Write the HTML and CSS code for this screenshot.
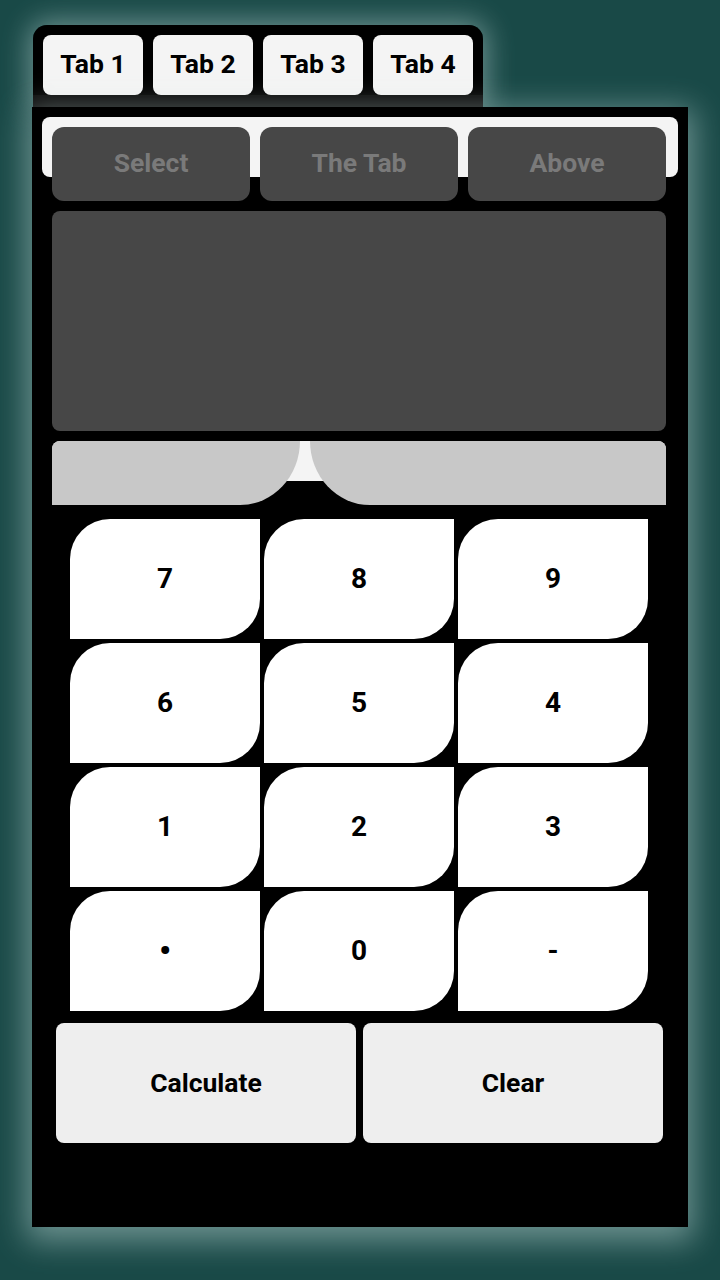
FILE: index.html
```html
<!DOCTYPE html>
<html>
<head>
<meta charset="utf-8">
<link rel="stylesheet" href="styles.css">
</head>
<body>
<div class="app">
  <div class="tabbar">
    <div class="tab">Tab 1</div>
    <div class="tab">Tab 2</div>
    <div class="tab">Tab 3</div>
    <div class="tab">Tab 4</div>
  </div>
  <div class="panel">
    <div class="strip">
      <div class="sbtn">Select</div>
      <div class="sbtn">The Tab</div>
      <div class="sbtn">Above</div>
    </div>
    <div class="display"></div>
    <div class="bars">
      <div class="bar bar-l"></div>
      <div class="bar bar-r"></div>
    </div>
    <div class="keypad">
      <div class="key">7</div>
      <div class="key">8</div>
      <div class="key">9</div>
      <div class="key">6</div>
      <div class="key">5</div>
      <div class="key">4</div>
      <div class="key">1</div>
      <div class="key">2</div>
      <div class="key">3</div>
      <div class="key dot">•</div>
      <div class="key">0</div>
      <div class="key">-</div>
    </div>
    <div class="actions">
      <div class="action">Calculate</div>
      <div class="action">Clear</div>
    </div>
  </div>
</div>
</body>
</html>
```
FILE: styles.css
```css
html, body {
  margin: 0;
  padding: 0;
}
body {
  width: 720px;
  height: 1280px;
  background: #194947;
  font-family: Roboto, "Liberation Sans", sans-serif;
  overflow: hidden;
}
.app {
  padding: 25px 0 0 32px;
}
.tabbar {
  display: inline-flex;
  gap: 10px;
  margin-left: 1px;
  padding: 10px 10px 12px;
  background: linear-gradient(#000 0, #000 70px, #0b0b0b 70px);
  border-radius: 14px 14px 0 0;
  box-shadow: 0 0 28px 4px rgba(210, 235, 232, 0.45);
  vertical-align: top;
}
.tab {
  width: 100px;
  height: 60px;
  box-sizing: border-box;
  padding-bottom: 3px;
  background: #f4f4f4;
  border-radius: 8px;
  display: flex;
  align-items: center;
  justify-content: center;
  font-weight: 700;
  font-size: 26.5px;
  color: #000;
}
.panel {
  position: relative;
  width: 656px;
  height: 1120px;
  background: #000;
  box-shadow: 0 8px 30px 6px rgba(210, 235, 232, 0.45);
  overflow: hidden;
}
.strip {
  margin: 10px 10px 0;
  height: 60px;
  box-sizing: border-box;
  padding: 10px;
  background: #f4f4f4;
  border-radius: 8px;
  display: flex;
  align-items: flex-start;
  gap: 10px;
}
.sbtn {
  flex: 0 0 198px;
  height: 74px;
  box-sizing: border-box;
  padding-bottom: 3px;
  background: #474747;
  border-radius: 12px;
  display: flex;
  align-items: center;
  justify-content: center;
  font-weight: 700;
  font-size: 26.5px;
  color: #7a7a7a;
}
.display {
  margin: 34px 22px 0 20px;
  height: 220px;
  background: #474747;
  border-radius: 8px;
}
.bars {
  margin: 10px 22px 0 20px;
  height: 40px;
  background: #f4f4f4;
  border-radius: 8px;
  display: flex;
  align-items: flex-start;
  gap: 10px;
}
.bar {
  height: 64px;
  background: #c8c8c8;
}
.bar-l {
  flex: 0 0 248px;
  border-radius: 8px 0 60px 0 / 8px 0 64px 0;
}
.bar-r {
  flex: 1;
  border-radius: 0 8px 0 60px / 0 8px 0 64px;
}
.keypad {
  margin: 38px 40px 0 38px;
  display: grid;
  grid-template-columns: repeat(3, 190px);
  grid-auto-rows: 120px;
  gap: 4px;
}
.key {
  box-sizing: border-box;
  padding-bottom: 2px;
  background: #fff;
  border-radius: 40px 0 40px 0;
  display: flex;
  align-items: center;
  justify-content: center;
  font-weight: 700;
  font-size: 28px;
  color: #000;
}
.key.dot {
  font-size: 34px;
}
.actions {
  margin-top: 12px;
  padding-left: 24px;
  display: flex;
  gap: 7px;
}
.action {
  width: 300px;
  height: 120px;
  box-sizing: border-box;
  padding-bottom: 2px;
  background: #eeeeee;
  border-radius: 8px;
  display: flex;
  align-items: center;
  justify-content: center;
  font-weight: 700;
  font-size: 26.5px;
  color: #000;
}
```
